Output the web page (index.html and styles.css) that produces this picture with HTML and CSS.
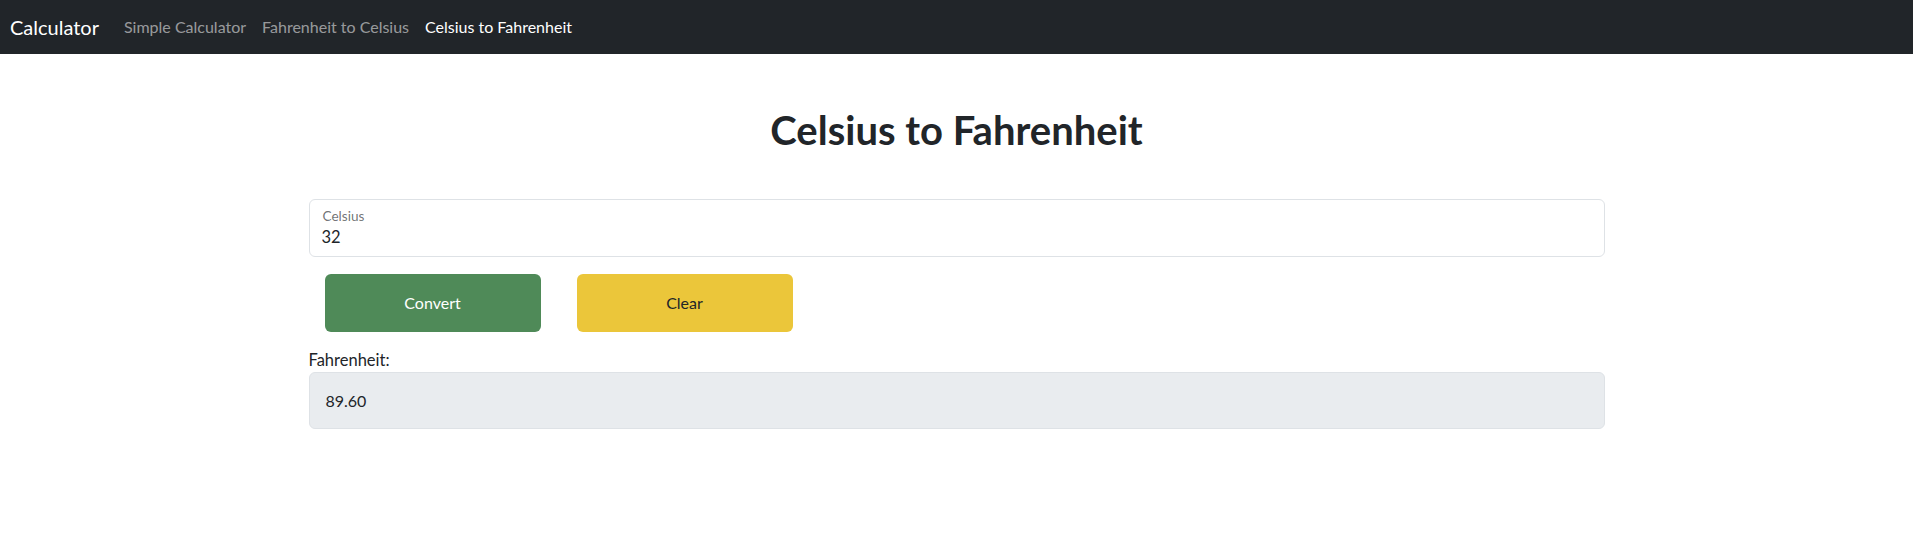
FILE: index.html
```html
<!DOCTYPE html>
<html lang="en">
<head>
<meta charset="utf-8">
<title>Celsius to Fahrenheit</title>
<link rel="stylesheet" href="styles.css">
</head>
<body>
<nav class="navbar">
  <a class="brand" href="#">Calculator</a>
  <ul class="nav">
    <li><a class="nav-link" href="#">Simple Calculator</a></li>
    <li><a class="nav-link" href="#">Fahrenheit to Celsius</a></li>
    <li><a class="nav-link active" href="#">Celsius to Fahrenheit</a></li>
  </ul>
</nav>
<main class="container">
  <h1 class="title">Celsius to Fahrenheit</h1>
  <div class="field">
    <label class="field-label" for="celsius">Celsius</label>
    <input class="field-input" id="celsius" type="text" value="32">
  </div>
  <div class="actions">
    <button class="btn btn-convert" type="button">Convert</button>
    <button class="btn btn-clear" type="button">Clear</button>
  </div>
  <div class="result-label">Fahrenheit:</div>
  <div class="result">89.60</div>
</main>
</body>
</html>
```

FILE: styles.css
```css
* { box-sizing: border-box; }
html, body { margin: 0; padding: 0; }
body {
  font-family: "Segoe UI", Lato, "Open Sans", sans-serif;
  font-size: 16px;
  line-height: 1.5;
  color: #212529;
  background: #fff;
}
.navbar {
  display: flex;
  align-items: center;
  height: 54px;
  padding: 0 10px;
  background: #212529;
}
.brand {
  font-size: 20px;
  line-height: 30px;
  color: #fff;
  text-decoration: none;
  margin-right: 17px;
}
.nav {
  display: flex;
  list-style: none;
  margin: 0;
  padding: 0;
}
.nav-link {
  display: block;
  padding: 8px 8px;
  font-size: 16px;
  color: rgba(255, 255, 255, 0.55);
  text-decoration: none;
}
.nav-link.active { color: #fff; }
.container {
  width: 1296px;
  margin: 0 auto;
  padding: 0;
}
.title {
  margin: 52px 0 0;
  height: 93px;
  text-align: center;
  font-size: 40px;
  font-weight: 700;
  line-height: 48px;
}
.field {
  position: relative;
  height: 58px;
  border: 1px solid #dee2e6;
  border-radius: 6px;
  background: #fff;
}
.field-label {
  position: absolute;
  top: 8px;
  left: 13px;
  font-size: 13.6px;
  line-height: 1.2;
  color: rgba(33, 37, 41, 0.65);
}
.field-input {
  display: block;
  width: 100%;
  height: 100%;
  border: 0;
  border-radius: 6px;
  padding: 24px 12px 6px;
  font: inherit;
  font-size: 16.5px;
  line-height: 1.5;
  color: #212529;
  background: transparent;
  outline: none;
}
.actions {
  display: flex;
  gap: 36px;
  padding: 17px 16px 16px;
}
.btn {
  width: 216px;
  height: 58px;
  border: 0;
  border-radius: 6px;
  font: inherit;
  font-size: 16px;
  cursor: pointer;
}
.btn-convert { background: #4f8a58; color: #fff; }
.btn-clear { background: #ebc63a; color: #212529; }
.result-label {
  margin-top: 0;
  line-height: 24px;
  font-size: 16.5px;
}
.result {
  height: 57px;
  display: flex;
  align-items: center;
  padding: 0 16px;
  background: #e9ecef;
  border: 1px solid #dee2e6;
  border-radius: 6px;
}
```
